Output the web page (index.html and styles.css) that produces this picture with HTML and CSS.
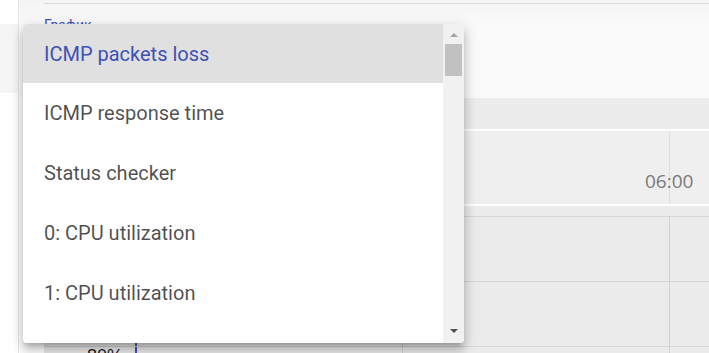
FILE: index.html
```html
<!DOCTYPE html>
<html lang="ru">
<head>
  <meta charset="UTF-8">
  <title>Мониторинг</title>
  <link rel="stylesheet" href="styles.css">
</head>
<body>
  <div class="page">
    <aside class="sidebar">
      <div class="side-top"></div>
      <div class="side-active"></div>
    </aside>

    <main class="main">
      <div class="header">
        <div class="header-line"></div>
        <label class="field-label">График</label>
      </div>

      <div class="chart">
        <div class="chart-band"></div>
        <div class="axis-row">
          <div class="axis-cell"></div>
          <div class="axis-cell tick"></div>
          <div class="axis-cell tick"></div>
          <div class="axis-cell tick"><span>06:00</span></div>
        </div>
        <div class="chart-gap"></div>
        <div class="grid-row">
          <div class="y-label"></div>
          <div class="plot first"></div>
          <div class="plot"></div>
          <div class="plot"></div>
        </div>
        <div class="grid-row">
          <div class="y-label"></div>
          <div class="plot first"></div>
          <div class="plot"></div>
          <div class="plot"></div>
        </div>
        <div class="grid-row">
          <div class="y-label"><span>80%</span></div>
          <div class="plot first"></div>
          <div class="plot"></div>
          <div class="plot"></div>
        </div>
      </div>
    </main>
  </div>

  <!-- opened select menu -->
  <div class="menu">
    <ul class="menu-list">
      <li class="menu-item selected">ICMP packets loss</li>
      <li class="menu-item">ICMP response time</li>
      <li class="menu-item">Status checker</li>
      <li class="menu-item">0: CPU utilization</li>
      <li class="menu-item">1: CPU utilization</li>
    </ul>
    <div class="scrollbar">
      <div class="arrow up"></div>
      <div class="track">
        <div class="thumb"></div>
      </div>
      <div class="arrow down"></div>
    </div>
  </div>
</body>
</html>
```

FILE: styles.css
```css
* {
  box-sizing: border-box;
}

body {
  margin: 0;
  height: 353px;
  overflow: hidden;
  background: #fff;
  font-family: 'Roboto', 'Noto Sans', sans-serif;
}

.page {
  display: flex;
  height: 353px;
  overflow: hidden;
}

/* left nav strip */
.sidebar {
  width: 19px;
  flex: none;
  border-right: 1px solid #e6e6e6;
  background: #fff;
}

.side-top {
  height: 24px;
}

.side-active {
  height: 69px;
  background: #f5f5f5;
}

.main {
  flex: 1;
  min-width: 0;
  overflow: hidden;
}

.header {
  height: 98px;
  padding-top: 3px;
  padding-left: 25px;
  background: linear-gradient(#f4f4f4, #fafafa 24px);
}

.header-line {
  height: 1px;
  background: #dcdcdc;
}

.field-label {
  display: block;
  margin-top: 13px;
  font-size: 14px;
  line-height: 16px;
  color: #3f51b5;
}

/* chart */
.chart {
  margin-left: 25px;
  background: #ececec;
}

.chart-band {
  height: 33px;
  border-bottom: 2px solid #fff;
}

.axis-row,
.grid-row {
  display: grid;
  grid-template-columns: 91px 267px 267px 267px;
}

.axis-row {
  height: 75px;
  background: #efefef;
  border-bottom: 2px solid #fff;
}

.axis-cell.tick {
  display: flex;
  align-items: flex-end;
  padding-bottom: 11px;
  border-left: 1px solid #dedede;
}

.axis-cell.tick span {
  margin-left: -25px;
  font-family: 'Open Sans', sans-serif;
  font-size: 19px;
  line-height: 24px;
  color: #7a7a7a;
}

.chart-gap {
  height: 10px;
}

.grid-row {
  height: 65px;
  border-top: 1px solid #d5d5d5;
  background: #ebebeb;
}

.y-label {
  text-align: right;
  padding-right: 12px;
}

.y-label span {
  display: inline-block;
  margin-top: -19px;
  font-family: 'Liberation Sans', Arial, sans-serif;
  font-size: 18px;
  line-height: 24px;
  color: #222;
}

.plot {
  border-left: 1px solid #d2d2d2;
}

.plot.first {
  border-left: 2px solid #3f51b5;
}

/* dropdown menu */
.menu {
  position: absolute;
  left: 23px;
  top: 24px;
  width: 441px;
  height: 319px;
  display: flex;
  background: #fff;
  border-radius: 4px;
  overflow: hidden;
  box-shadow: 0 5px 5px -3px rgba(0, 0, 0, 0.2),
    0 8px 10px 1px rgba(0, 0, 0, 0.14),
    0 3px 14px 2px rgba(0, 0, 0, 0.12);
}

.menu-list {
  flex: 1;
  margin: 0;
  padding: 0;
  list-style: none;
}

.menu-item {
  height: 60px;
  padding-left: 21px;
  display: flex;
  align-items: center;
  font-size: 20px;
  color: rgba(0, 0, 0, 0.7);
}

.menu-item.selected {
  height: 59px;
  background: #e0e0e0;
  color: #3f51b5;
}

.scrollbar {
  width: 21px;
  flex: none;
  display: flex;
  flex-direction: column;
  align-items: center;
  background: #f1f1f1;
}

.arrow {
  width: 0;
  height: 0;
  border-left: 4px solid transparent;
  border-right: 4px solid transparent;
}

.arrow.up {
  margin-top: 9px;
  border-bottom: 4px solid #a3a3a3;
}

.arrow.down {
  margin-bottom: 10px;
  border-top: 4px solid #505050;
}

.track {
  flex: 1;
  width: 100%;
  padding: 7px 2px 0;
}

.thumb {
  height: 32px;
  background: #c1c1c1;
}
```
